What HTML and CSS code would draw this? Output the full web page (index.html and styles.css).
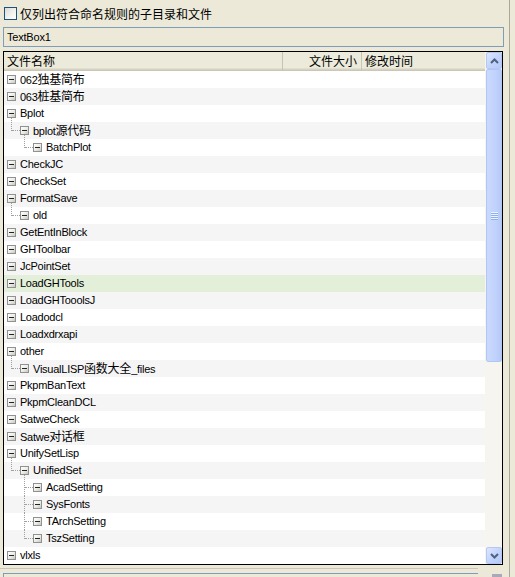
FILE: index.html
```html
<!DOCTYPE html>
<html lang="zh-CN">
<head>
<meta charset="utf-8">
<title>目录列表</title>
<link rel="stylesheet" href="styles.css">
</head>
<body>
<div class="win">
  <label class="chk"><span class="cbox"></span><span class="h">仅列出符合命名规则的子目录和文件</span></label>
  <div class="tb">TextBox1</div>
  <div class="lv">
    <div class="main">
      <div class="hdr">
        <div class="c1 h">文件名称</div>
        <div class="c2 h">文件大小</div>
        <div class="c3 h">修改时间</div>
      </div>
      <div class="rows">
        <div class="row"><i class="ex"></i><span class="t">062<span class="h">独基简布</span></span></div>
        <div class="row"><i class="ex"></i><span class="t">063<span class="h">桩基简布</span></span></div>
        <div class="row"><i class="ex"></i><span class="t">Bplot</span></div>
        <div class="row l1"><i class="br first last"></i><i class="ex"></i><span class="t">bplot<span class="h">源代码</span></span></div>
        <div class="row l2"><i class="br first last"></i><i class="ex"></i><span class="t">BatchPlot</span></div>
        <div class="row"><i class="ex"></i><span class="t">CheckJC</span></div>
        <div class="row"><i class="ex"></i><span class="t">CheckSet</span></div>
        <div class="row"><i class="ex"></i><span class="t">FormatSave</span></div>
        <div class="row l1"><i class="br first last"></i><i class="ex"></i><span class="t">old</span></div>
        <div class="row"><i class="ex"></i><span class="t">GetEntInBlock</span></div>
        <div class="row"><i class="ex"></i><span class="t">GHToolbar</span></div>
        <div class="row"><i class="ex"></i><span class="t">JcPointSet</span></div>
        <div class="row sel"><i class="ex"></i><span class="t">LoadGHTools</span></div>
        <div class="row"><i class="ex"></i><span class="t">LoadGHTooolsJ</span></div>
        <div class="row"><i class="ex"></i><span class="t">Loadodcl</span></div>
        <div class="row"><i class="ex"></i><span class="t">Loadxdrxapi</span></div>
        <div class="row"><i class="ex"></i><span class="t">other</span></div>
        <div class="row l1"><i class="br first last"></i><i class="ex"></i><span class="t">VisualLISP<span class="h">函数大全</span>_files</span></div>
        <div class="row"><i class="ex"></i><span class="t">PkpmBanText</span></div>
        <div class="row"><i class="ex"></i><span class="t">PkpmCleanDCL</span></div>
        <div class="row"><i class="ex"></i><span class="t">SatweCheck</span></div>
        <div class="row"><i class="ex"></i><span class="t">Satwe<span class="h">对话框</span></span></div>
        <div class="row"><i class="ex"></i><span class="t">UnifySetLisp</span></div>
        <div class="row l1"><i class="br first last"></i><i class="ex"></i><span class="t">UnifiedSet</span></div>
        <div class="row l2"><i class="br first"></i><i class="ex"></i><span class="t">AcadSetting</span></div>
        <div class="row l2"><i class="br"></i><i class="ex"></i><span class="t">SysFonts</span></div>
        <div class="row l2"><i class="br"></i><i class="ex"></i><span class="t">TArchSetting</span></div>
        <div class="row l2"><i class="br last"></i><i class="ex"></i><span class="t">TszSetting</span></div>
        <div class="row"><i class="ex"></i><span class="t">vlxls</span></div>
      </div>
    </div>
    <div class="sb">
      <div class="btn"><svg width="9" height="6" viewBox="0 0 9 6"><path d="M1 5 L4.5 1.5 L8 5" stroke="#4d6185" stroke-width="2" fill="none"/></svg></div>
      <div class="thumb"><svg width="7" height="8" viewBox="0 0 7 8"><rect y="0" width="7" height="1" fill="#eef4fe"/><rect y="1" width="7" height="1" fill="#8cb0f0"/><rect y="2" width="7" height="1" fill="#eef4fe"/><rect y="3" width="7" height="1" fill="#8cb0f0"/><rect y="4" width="7" height="1" fill="#eef4fe"/><rect y="5" width="7" height="1" fill="#8cb0f0"/><rect y="6" width="7" height="1" fill="#eef4fe"/><rect y="7" width="7" height="1" fill="#8cb0f0"/></svg></div>
      <div class="track"></div>
      <div class="btn"><svg width="9" height="6" viewBox="0 0 9 6"><path d="M1 1 L4.5 4.5 L8 1" stroke="#4d6185" stroke-width="2" fill="none"/></svg></div>
    </div>
  </div>
  <div class="foot">
    <div class="bar"><div class="tb2"></div></div>
    <div class="sq"></div>
  </div>
</div>
</body>
</html>
```
FILE: styles.css
```css
html, body {
  margin: 0;
  padding: 0;
  background: #ece9d8;
}
body {
  font-family: "Liberation Sans", "Noto Sans CJK SC", sans-serif;
  font-size: 11px;
  color: #000;
}
.win {
  width: 509px;
  height: 577px;
  border-right: 1px solid #aca899;
  overflow: hidden;
}
.h {
  font-family: "Noto Sans CJK SC", sans-serif;
  font-size: 12px;
}
.chk {
  display: flex;
  align-items: center;
  gap: 3px;
  height: 13px;
  margin: 7px 0 0 4px;
}
.cbox {
  width: 13px;
  height: 13px;
  box-sizing: border-box;
  border: 1px solid #1c5180;
  background: linear-gradient(135deg, #dcdbd4 0%, #f4f4f0 60%, #ffffff 100%);
}
.tb {
  margin: 7px 0 0 3px;
  width: 501px;
  height: 20px;
  box-sizing: border-box;
  border: 1px solid #7f9db9;
  padding-left: 3px;
  line-height: 18px;
  letter-spacing: -0.2px;
}
.lv {
  margin: 4px 0 0 3px;
  width: 500px;
  height: 514px;
  box-sizing: border-box;
  border: 1px solid #000;
  display: flex;
  background: #fff;
}
.main {
  flex: 1;
  min-width: 0;
  display: flex;
  flex-direction: column;
  overflow: hidden;
}
.hdr {
  height: 19px;
  flex-shrink: 0;
  display: flex;
  background: #ebeadb;
  box-shadow: inset 0 -1px #cbc7b8, inset 0 -2px #d6d2c2, inset 0 -3px #e2decd;
  line-height: 17px;
}
.c1 {
  width: 278px;
  padding-left: 3px;
  box-sizing: border-box;
}
.c2 {
  width: 79px;
  box-sizing: border-box;
  border-left: 1px solid #c7c5b2;
  text-align: right;
  padding-right: 4px;
}
.c3 {
  flex: 1;
  border-left: 1px solid #c7c5b2;
  padding-left: 3px;
}
.rows {
  flex: 1;
  overflow: hidden;
}
.row {
  height: 17px;
  display: flex;
  align-items: center;
  padding-left: 3px;
  white-space: nowrap;
  letter-spacing: -0.25px;
}
.row:nth-child(even) {
  background: #f5f5f5;
}
.row.sel {
  background: #e3efd9;
}
.row.l1 {
  padding-left: 7px;
}
.row.l2 {
  padding-left: 20px;
}
.ex {
  width: 9px;
  height: 9px;
  box-sizing: border-box;
  border: 1px solid #919191;
  background: linear-gradient(135deg, #ffffff 0%, #ebebe6 55%, #c8c8c0 100%);
  position: relative;
  flex-shrink: 0;
}
.ex::after {
  content: "";
  position: absolute;
  left: 1px;
  top: 3px;
  width: 5px;
  height: 1px;
  background: #222;
}
.t {
  margin-left: 4px;
  line-height: 17px;
}
.br {
  width: 9px;
  height: 17px;
  position: relative;
  flex-shrink: 0;
}
.br::before {
  content: "";
  position: absolute;
  left: 0;
  top: 0;
  bottom: 0;
  border-left: 1px dotted #a0a0a0;
}
.br.first::before {
  top: -4px;
}
.br.last::before {
  bottom: 8px;
}
.br::after {
  content: "";
  position: absolute;
  left: 1px;
  top: 8px;
  width: 8px;
  border-top: 1px dotted #a0a0a0;
}
.sb {
  width: 17px;
  flex-shrink: 0;
  display: flex;
  flex-direction: column;
  background: #f6f5f0;
}
.btn {
  height: 17px;
  flex-shrink: 0;
  box-sizing: border-box;
  margin: 0 0 0 1px;
  border: 1px solid #b4c8f6;
  border-radius: 2px;
  background: linear-gradient(135deg, #dde7fe 0%, #c4d4fc 50%, #b6c9f8 100%);
  display: flex;
  align-items: center;
  justify-content: center;
}
.thumb {
  height: 293px;
  flex-shrink: 0;
  box-sizing: border-box;
  margin: 0 0 0 1px;
  border: 1px solid #b2c6f4;
  border-radius: 2px;
  background: linear-gradient(90deg, #cad9fd 0%, #c1d2fc 60%, #b6c9f8 100%);
  display: flex;
  align-items: center;
  justify-content: center;
}
.track {
  flex: 1;
}
.foot {
  display: flex;
  margin-top: 3px;
}
.bar {
  width: 478px;
  border-top: 1px solid #cbc7b8;
  padding-top: 4px;
}
.tb2 {
  margin-left: 3px;
  height: 6px;
  border-top: 1px solid #7f9db9;
  border-left: 1px solid #7f9db9;
  background: #ece9d8;
}
.sq {
  margin: 6px 0 0 14px;
  width: 10px;
  height: 4px;
  background: #a9a9b8;
}
```
